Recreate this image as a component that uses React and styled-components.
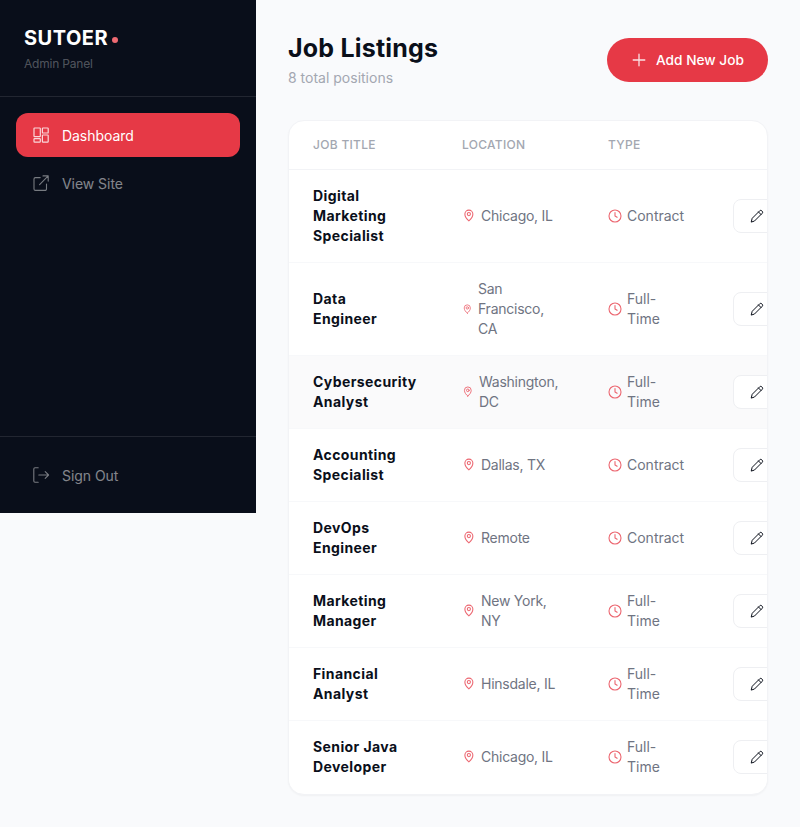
import React from 'react';
import styled, { createGlobalStyle } from 'styled-components';

const Global = createGlobalStyle`
  html, body { margin: 0; padding: 0; background: #f9fafc; }
  * { box-sizing: border-box; }
  body { font-family: "Inter", "Liberation Sans", sans-serif; }
`;
const Page = styled.div`display: flex; align-items: flex-start; width: 800px; height: 827px; overflow: hidden;`;
const Sidebar = styled.aside`width: 256px; height: 513px; flex: none; background: #090e1a; display: flex; flex-direction: column;`;
const Brand = styled.div`padding: 26px 24px 0; border-bottom: 1px solid rgba(255,255,255,.1); height: 97px;`;
const Logo = styled.div`font-size: 20px; line-height: 24px; font-weight: 700; color: #fff; display: flex; align-items: center; gap: 4px; letter-spacing: .5px;`;
const Dot = styled.span`width: 6px; height: 6px; border-radius: 50%; background: #ee6a72; margin-top: 4px;`;
const Sub = styled.div`margin-top: 6px; font-size: 12px; line-height: 16px; letter-spacing: -.2px; color: rgba(255,255,255,.3);`;
const Nav = styled.nav`padding: 16px; display: flex; flex-direction: column; gap: 4px; flex: 1;`;
const NavItem = styled.a`
  height: 44px; display: flex; align-items: center; gap: 12px; padding: 0 16px; border-radius: 12px;
  font-size: 14px; letter-spacing: -.05px; color: ${p => p.$active ? '#fff' : 'rgba(255,255,255,.5)'};
  background: ${p => p.$active ? '#e63946' : 'transparent'};
  svg { opacity: ${p => p.$active ? .8 : .9}; }
`;
const Foot = styled.div`border-top: 1px solid rgba(255,255,255,.1); padding: 16px; height: 77px;`;
const Main = styled.main`flex: 1; min-width: 0; padding: 32px;`;
const Head = styled.header`display: flex; justify-content: space-between; align-items: flex-start; margin-bottom: 32px;`;
const Title = styled.h1`margin: 0; font-size: 25px; line-height: 32px; font-weight: 700; color: #0a0f1a; letter-spacing: .2px;`;
const Subtitle = styled.p`margin: 4px 0 0; font-size: 14px; line-height: 20px; color: #a3a7b1;`;
const AddBtn = styled.button`
  margin-top: 6px; height: 44px; width: 161px; padding: 0 24px; border: 0; border-radius: 22px; background: #e63946; color: #fff;
  display: flex; align-items: center; gap: 9px; font: 500 13.7px "Inter", sans-serif; white-space: nowrap;
  svg { opacity: .85; }
`;
const Card = styled.section`background: #fff; border: 1px solid #f2f3f6; border-radius: 16px; overflow: hidden; box-shadow: 0 1px 2px rgba(10,15,26,.04);`;
const Table = styled.table`width: 520px; table-layout: fixed; border-collapse: collapse;`;
const Th = styled.th`
  height: 48px; padding: 0 24px; text-align: left; font-size: 12px; font-weight: 500; letter-spacing: .3px; color: #a3a7b1; text-transform: uppercase; border-bottom: 1px solid #f2f3f6;
`;
const Tr = styled.tr`background: ${p => p.$hover ? '#fafafb' : '#fff'}; border-bottom: 1px solid ${p => p.$last ? 'transparent' : '#f7f8fa'};`;
const Td = styled.td`padding: 16px 24px; vertical-align: middle;`;
const JobName = styled.div`max-width: 98px; font-size: 14px; line-height: 20px; font-weight: 700; color: #0a0f1a; letter-spacing: .4px;`;
const Meta = styled.div`display: flex; align-items: center; gap: 5px; font-size: 14px; line-height: 20px; color: #6f7482;`;
const LocationMeta = styled(Meta)`gap: 6px; letter-spacing: -.25px;`;
const EditBtn = styled.button`
  display: flex; align-items: center; justify-content: flex-start; width: 64px; height: 34px; padding: 0 16px; background: #fff; border: 1px solid #eeeff2; border-radius: 8px; color: #0a0f1a;
`;
const Icon = styled.svg`flex: none; fill: none; stroke: ${p => p.$color || 'currentColor'}; stroke-width: ${p => p.$w || 1.1}; stroke-linecap: round; stroke-linejoin: round;`;

const DashIcon = () => (
  <Icon width="18" height="18" viewBox="0 0 18 18" $w={1.2}>
    <rect x="2" y="2" width="6.3" height="8.6" rx=".6" />
    <rect x="10.4" y="2" width="5.8" height="5" rx=".6" />
    <rect x="10.4" y="9" width="5.8" height="7.2" rx=".6" />
    <rect x="2" y="12.6" width="6.3" height="3.6" rx=".6" />
  </Icon>
);
const ExtIcon = () => (
  <Icon width="18" height="18" viewBox="0 0 18 18">
    <path d="M8.2 3.6H3.4a1.4 1.4 0 0 0-1.4 1.4v10a1.4 1.4 0 0 0 1.4 1.4h9.7a1.4 1.4 0 0 0 1.4-1.4V10" />
    <path d="M7.6 10.6 16.2 1.9M11 1.9h5.2v5.2" />
  </Icon>
);
const OutIcon = () => (
  <Icon width="18" height="18" viewBox="0 0 18 18">
    <path d="M6.2 1.8H3a1.2 1.2 0 0 0-1.2 1.2v12a1.2 1.2 0 0 0 1.2 1.2h3.2" />
    <path d="M6.8 9h9.8M13.2 5.7 16.6 9l-3.4 3.3" />
  </Icon>
);
const PlusIcon = () => (
  <Icon width="16" height="16" viewBox="0 0 16 16" $w={1.3}><path d="M8 2.2v11.6M2.2 8h11.6" /></Icon>
);
const PinIcon = ({ size }) => (
  <Icon width={size} height={size} viewBox="0 0 14 14" $color="#ec6670" $w={1.15}>
    <path d="M7.4 12.8C5 10.9 3.1 8.3 3.1 5.5a4.3 4.3 0 0 1 8.6 0c0 2.8-1.9 5.4-4.3 7.3Z" />
    <circle cx="7.4" cy="5.5" r="1.7" />
  </Icon>
);
const ClockIcon = () => (
  <Icon width="14" height="14" viewBox="0 0 14 14" $color="#ec6670" $w={1.1}>
    <circle cx="7" cy="7" r="6" />
    <path d="M7 3.6V7l2.1 1.3" />
  </Icon>
);
const PencilIcon = () => (
  <Icon width="14" height="14" viewBox="0 0 14 14" $w={1}>
    <path d="M1.3 12.7 2.2 9.3 9.7 1.8a1.5 1.5 0 0 1 2.1 0l.4.4a1.5 1.5 0 0 1 0 2.1L4.7 11.8Z" />
    <path d="M8.5 3 11 5.5" />
  </Icon>
);

const jobs = [
  { title: 'Digital Marketing Specialist', loc: 'Chicago, IL', type: 'Contract', pin: 13 },
  { title: 'Data Engineer', loc: 'San Francisco, CA', type: 'Full-Time', pin: 10 },
  { title: 'Cybersecurity Analyst', loc: 'Washington, DC', type: 'Full-Time', pin: 11, hover: true },
  { title: 'Accounting Specialist', loc: 'Dallas, TX', type: 'Contract', pin: 13 },
  { title: 'DevOps Engineer', loc: 'Remote', type: 'Contract', pin: 13 },
  { title: 'Marketing Manager', loc: 'New York, NY', type: 'Full-Time', pin: 13 },
  { title: 'Financial Analyst', loc: 'Hinsdale, IL', type: 'Full-Time', pin: 13 },
  { title: 'Senior Java Developer', loc: 'Chicago, IL', type: 'Full-Time', pin: 13 },
];

export default function App() {
  return (
    <Page>
      <Global />
      <Sidebar>
        <Brand>
          <Logo>SUTOER<Dot /></Logo>
          <Sub>Admin Panel</Sub>
        </Brand>
        <Nav>
          <NavItem $active><DashIcon />Dashboard</NavItem>
          <NavItem><ExtIcon />View Site</NavItem>
        </Nav>
        <Foot><NavItem><OutIcon />Sign Out</NavItem></Foot>
      </Sidebar>
      <Main>
        <Head>
          <div>
            <Title>Job Listings</Title>
            <Subtitle>8 total positions</Subtitle>
          </div>
          <AddBtn><PlusIcon />Add New Job</AddBtn>
        </Head>
        <Card>
          <Table>
            <colgroup><col width="149" /><col width="146" /><col width="125" /><col width="100" /></colgroup>
            <thead>
              <tr><Th>Job Title</Th><Th>Location</Th><Th>Type</Th><Th /></tr>
            </thead>
            <tbody>
              {jobs.map((j, i) => (
                <Tr key={j.title} $hover={j.hover} $last={i === jobs.length - 1}>
                  <Td><JobName>{j.title}</JobName></Td>
                  <Td><LocationMeta><PinIcon size={j.pin} />{j.loc}</LocationMeta></Td>
                  <Td><Meta><ClockIcon />{j.type}</Meta></Td>
                  <Td><EditBtn aria-label="Edit"><PencilIcon /></EditBtn></Td>
                </Tr>
              ))}
            </tbody>
          </Table>
        </Card>
      </Main>
    </Page>
  );
}
